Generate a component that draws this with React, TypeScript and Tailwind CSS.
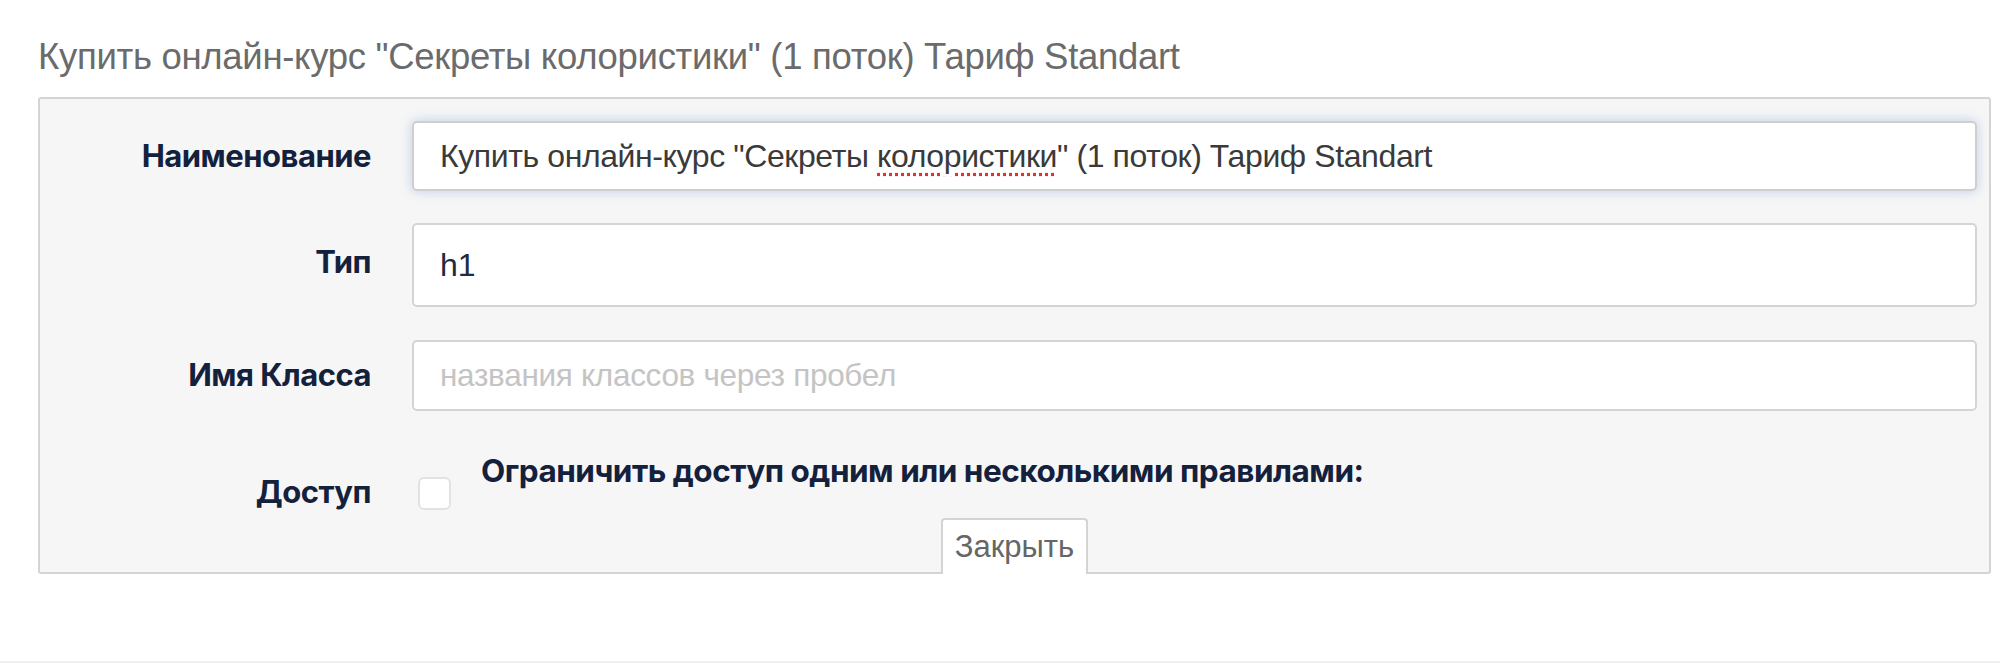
export default function App() {
  const label = "w-[372px] shrink-0 text-right pr-[41px] text-[31px] font-bold text-[#14213d] tracking-[-0.5px]";
  return (
    <div className="w-[2000px] h-[672px] bg-white relative" style={{ fontFamily: '"Liberation Sans", Arial, sans-serif' }}>
      <div className="pt-[36px] pl-[38px] text-[36.5px] text-[#6b6b6b] leading-[42px] tracking-[-0.3px]">
        Купить онлайн-курс "Секреты колористики" (1 поток) Тариф Standart
      </div>
      <div className="ml-[38px] mr-[9px] mt-[19px] h-[477px] bg-[#f6f6f6] border-2 border-[#d4d4d4] rounded-[3px] flex flex-col" style={{ fontFamily: 'Inter, "Liberation Sans", sans-serif' }}>
        <div className="flex items-center mt-[22px]">
          <div className={label}>Наименование</div>
          <div className="flex-1 mr-[12px] h-[70px] bg-white border-2 border-[#cfcfcf] rounded-[5px] shadow-[0_0_12px_rgba(120,160,210,0.45)] flex items-center pl-[26px] text-[32px] text-[#3a3a3a] tracking-[-0.4px] whitespace-pre" style={{ fontFamily: '"Liberation Sans", sans-serif' }}>
            <span>Купить онлайн-курс "Секреты </span><span className="underline decoration-dotted decoration-[#e03030] underline-offset-[6px]">колористики</span><span>" (1 поток) Тариф Standart</span>
          </div>
        </div>
        <div className="flex items-start mt-[32px]">
          <div className={label + " pt-[16px]"}>Тип</div>
          <div className="flex-1 mr-[12px] h-[84px] bg-white border-2 border-[#d4d4d4] rounded-[5px] flex items-center pl-[26px] text-[32px] text-[#1f2a44]" style={{ fontFamily: '"Liberation Sans", sans-serif' }}>
            h1
          </div>
        </div>
        <div className="flex items-center mt-[33px]">
          <div className={label}>Имя Класса</div>
          <div className="flex-1 mr-[12px] h-[71px] bg-white border-2 border-[#d4d4d4] rounded-[5px] flex items-center pl-[26px] text-[31.5px] text-[#c4c4c4] tracking-[-0.3px]" style={{ fontFamily: '"Liberation Sans", sans-serif' }}>
            названия классов через пробел
          </div>
        </div>
        <div className="flex items-start mt-[36px]">
          <div className={label + " pt-[22px]"}>Доступ</div>
          <div className="w-[33px] h-[33px] mt-[30px] ml-[6px] bg-white border-2 border-[#e2e2e2] rounded-[6px]" />
          <div className="ml-[30px] text-[31.5px] font-bold text-[#14213d] tracking-[-0.5px]">Ограничить доступ одним или несколькими правилами:</div>
        </div>
        <div className="flex-1" />
        <div className="flex">
          <div className="ml-[901px] w-[147px] h-[56px] bg-white border-2 border-b-0 border-[#d4d4d4] rounded-t-[4px] flex items-center justify-center text-[31px] text-[#666] mb-[-2px]" style={{ fontFamily: '"Liberation Sans", sans-serif' }}>
            Закрыть
          </div>
        </div>
      </div>
      <div className="absolute left-0 right-0 top-[661px] h-[2px] bg-[#f0f0f0]" />
    </div>
  );
}
